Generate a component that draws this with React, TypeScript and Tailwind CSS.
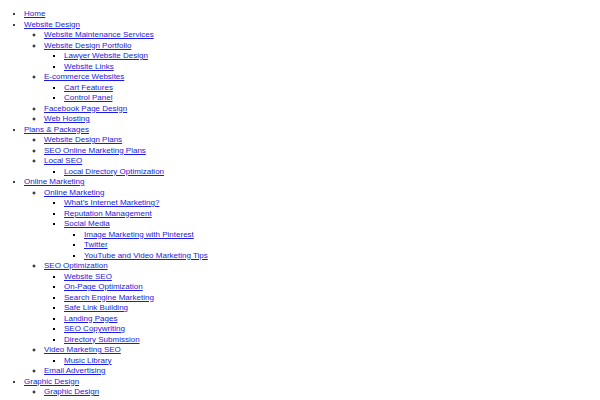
type Item = { label: string; children?: Item[] };

const menu: Item[] = [
  { label: 'Home' },
  {
    label: 'Website Design',
    children: [
      { label: 'Website Maintenance Services' },
      {
        label: 'Website Design Portfolio',
        children: [{ label: 'Lawyer Website Design' }, { label: 'Website Links' }],
      },
      {
        label: 'E-commerce Websites',
        children: [{ label: 'Cart Features' }, { label: 'Control Panel' }],
      },
      { label: 'Facebook Page Design' },
      { label: 'Web Hosting' },
    ],
  },
  {
    label: 'Plans & Packages',
    children: [
      { label: 'Website Design Plans' },
      { label: 'SEO Online Marketing Plans' },
      { label: 'Local SEO', children: [{ label: 'Local Directory Optimization' }] },
    ],
  },
  {
    label: 'Online Marketing',
    children: [
      {
        label: 'Online Marketing',
        children: [
          { label: 'What’s Internet Marketing?' },
          { label: 'Reputation Management' },
          {
            label: 'Social Media',
            children: [
              { label: 'Image Marketing with Pinterest' },
              { label: 'Twitter' },
              { label: 'YouTube and Video Marketing Tips' },
            ],
          },
        ],
      },
      {
        label: 'SEO Optimization',
        children: [
          { label: 'Website SEO' },
          { label: 'On-Page Optimization' },
          { label: 'Search Engine Marketing' },
          { label: 'Safe Link Building' },
          { label: 'Landing Pages' },
          { label: 'SEO Copywriting' },
          { label: 'Directory Submission' },
        ],
      },
      { label: 'Video Marketing SEO', children: [{ label: 'Music Library' }] },
      { label: 'Email Advertising' },
    ],
  },
  {
    label: 'Graphic Design',
    children: [{ label: 'Graphic Design' }, { label: 'Graphic Design Portfolio' }],
  },
];

// bullet style per depth, like the browser defaults
const listClass = ['list-disc pl-6', 'list-[circle] pl-5', 'list-[square] pl-5', 'list-[square] pl-5'];

function Menu({ items, depth }: { items: Item[]; depth: number }) {
  return (
    <ul className={listClass[Math.min(depth, 3)]}>
      {items.map((item, i) => (
        <li key={i} className="marker:text-black">
          <a href="#" className="text-[#1a1ae0] underline">
            {item.label}
          </a>
          {item.children && <Menu items={item.children} depth={depth + 1} />}
        </li>
      ))}
    </ul>
  );
}

export default function App() {
  return (
    <div className="h-[400px] overflow-hidden bg-white pt-[9px] text-[8px] leading-[10.5px] font-['Liberation_Sans',Arial,sans-serif]">
      <Menu items={menu} depth={0} />
    </div>
  );
}
